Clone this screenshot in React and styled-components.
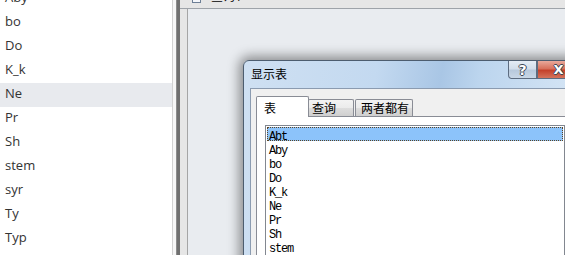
import React from 'react';
import styled, { createGlobalStyle } from 'styled-components';

const GlobalStyle = createGlobalStyle`
	html, body {
		margin: 0;
		padding: 0;
		overflow: hidden;
		background: #fff;
	}
	#root {
		width: 565px;
		height: 255px;
		overflow: hidden;
	}
`;

const Screen = styled.div`
	display: flex;
	width: 565px;
	height: 255px;
	overflow: hidden;
	font-family: 'Open Sans', 'Noto Sans CJK SC', sans-serif;
`;

const NavPane = styled.div`
	width: 172px;
	flex-shrink: 0;
	height: 100%;
	overflow: hidden;
	background: #fff;
	border-right: 1px solid #d2d2d2;
`;

const NavList = styled.ul`
	list-style: none;
	margin: -13px 0 0;
	padding: 0;
`;

const NavItem = styled.li`
	height: 24px;
	line-height: 21px;
	padding-left: 5px;
	font-size: 13px;
	color: #333;
	background: ${props => (props.active ? '#e8eaee' : 'transparent')};
`;

const Splitter = styled.div`
	width: 7px;
	flex-shrink: 0;
	background: linear-gradient(to right, #f6f6f6 0 3px, #8c8c8c 3px 4px, #6f6f6f 4px 7px);
`;

const Main = styled.div`
	flex: 1;
	display: flex;
	flex-direction: column;
	min-width: 0;
`;

const Toolbar = styled.div`
	height: 8px;
	flex-shrink: 0;
	display: flex;
	align-items: flex-end;
	gap: 10px;
	padding-left: 12px;
	overflow: hidden;
	background: #e6e6e6;
	border-bottom: 1px solid #9ea3a9;
`;

const DocIcon = styled.svg`
	flex-shrink: 0;
	margin-bottom: 5px;
`;

const ToolbarLabel = styled.span`
	font-size: 12px;
	line-height: 14px;
	margin-bottom: 4px;
	color: #000;
`;

const Body = styled.div`
	flex: 1;
	display: flex;
	padding-left: 7px;
	background: #e6e6e6;
`;

const Workspace = styled.div`
	flex: 1;
	position: relative;
	background: #e9ecf0;
	border-left: 1px solid #a5a5a5;
`;

const Dialog = styled.div`
	position: absolute;
	left: 55px;
	top: 51px;
	width: 344px;
	height: 240px;
	display: flex;
	flex-direction: column;
	padding: 0 6px;
	box-sizing: border-box;
	border: 1px solid #4d5d6f;
	border-radius: 6px 6px 0 0;
	background: linear-gradient(100deg, #cfe0f2 0%, #c3d9f0 35%, #a9c6e5 52%, #bcd5ee 62%, #d2e3f4 85%, #c9ddf2 100%);
	box-shadow: 0 0 12px 4px rgba(0, 0, 0, 0.4);
`;

const TitleBar = styled.div`
	height: 27px;
	flex-shrink: 0;
	display: flex;
	align-items: flex-start;
`;

const Title = styled.span`
	margin: 6px 0 0 1px;
	font-family: 'Noto Sans CJK SC', sans-serif;
	font-size: 12px;
	line-height: 14px;
	color: #000;
`;

const CaptionButtons = styled.div`
	margin-left: auto;
	display: flex;
`;

const CaptionButton = styled.div`
	width: ${props => (props.close ? 43 : 29)}px;
	height: 18px;
	box-sizing: border-box;
	display: flex;
	align-items: center;
	justify-content: center;
	border: 1px solid #5d6c80;
	border-top: none;
	border-radius: ${props => (props.close ? '0 0 4px 0' : '0 0 0 4px')};
	background: ${props =>
		props.close
			? 'linear-gradient(to bottom, #e9a99b 0%, #d7715c 45%, #c4412b 55%, #d4735c 100%)'
			: 'linear-gradient(to bottom, #e4ecf5 0%, #d2deeb 45%, #b8c9dc 55%, #c9d7e6 100%)'};
	color: #fff;
	font-family: 'DejaVu Sans', sans-serif;
	font-weight: bold;
	font-size: ${props => (props.close ? 13 : 14)}px;
	line-height: 16px;
	text-shadow: 1px 0 0 #3b4654, -1px 0 0 #3b4654, 0 1px 0 #3b4654, 0 -1px 0 #3b4654;
`;

const Content = styled.div`
	flex: 1;
	display: flex;
	flex-direction: column;
	padding: 7px 5px 0;
	background: #f0f0f0;
	border: 1px solid #8b9bb0;
	border-bottom: none;
`;

const TabStrip = styled.div`
	height: 20px;
	display: flex;
	align-items: flex-end;
	flex-shrink: 0;
`;

const Tab = styled.div`
	position: relative;
	z-index: ${props => (props.selected ? 1 : 0)};
	width: ${props => props.width}px;
	height: ${props => (props.selected ? 21 : 17)}px;
	margin-bottom: ${props => (props.selected ? -1 : 0)}px;
	margin-left: ${props => props.offset || 0}px;
	box-sizing: border-box;
	padding: ${props => (props.selected ? 4 : 1)}px 0 0 ${props => props.indent}px;
	border: 1px solid #898c95;
	border-bottom: none;
	border-radius: 2px 2px 0 0;
	background: ${props =>
		props.selected ? '#fff' : 'linear-gradient(to bottom, #f3f3f3 0%, #ebebeb 50%, #dddddd 51%, #cfcfcf 100%)'};
	font-family: 'Noto Sans CJK SC', sans-serif;
	font-size: 12px;
	line-height: 14px;
	color: #000;
	white-space: nowrap;
`;

const TabPanel = styled.div`
	flex: 1;
	padding: 8px 8px 0;
	background: #fff;
	border: 1px solid #898c95;
	border-bottom: none;
`;

const ListBox = styled.ul`
	list-style: none;
	margin: 0;
	padding: 1px;
	height: 200px;
	background: #fff;
	border: 1px solid #828790;
	font-family: 'Liberation Mono', monospace;
	font-size: 12px;
	letter-spacing: -1.2px;
	color: #000;
`;

const ListRow = styled.li`
	height: 14px;
	line-height: 13px;
	box-sizing: border-box;
	padding: 3px 0 0 1px;
	border: 1px dotted ${props => (props.selected ? '#5c4424' : 'transparent')};
	background: ${props => (props.selected ? '#8cc3fa' : 'transparent')};
	white-space: nowrap;
`;

const navItems = ['Aby', 'bo', 'Do', 'K_k', 'Ne', 'Pr', 'Sh', 'stem', 'syr', 'Ty', 'Typ'];
const tableItems = ['Abt', 'Aby', 'bo', 'Do', 'K_k', 'Ne', 'Pr', 'Sh', 'stem', 'syr'];

const tabs = [
	{ label: '表', width: 53, indent: 7, selected: true },
	{ label: '查询', width: 46, indent: 3, offset: -1 },
	{ label: '两者都有', width: 58, indent: 5, offset: 1 },
];

const App = () => (
	<>
		<GlobalStyle />
		<Screen>
			<NavPane>
				<NavList>
					{navItems.map(name => (
						<NavItem key={name} active={name === 'Ne'}>
							{name}
						</NavItem>
					))}
				</NavList>
			</NavPane>
			<Splitter />
			<Main>
				<Toolbar>
					<DocIcon width="9" height="10" viewBox="0 0 9 10">
						<rect x="0.5" y="0.5" width="8" height="9" fill="#f4f6fa" stroke="#6d7f96" />
						<rect x="2" y="6" width="5" height="1" fill="#8aa0bb" />
					</DocIcon>
					<ToolbarLabel>查询1</ToolbarLabel>
				</Toolbar>
				<Body>
					<Workspace>
						<Dialog>
							<TitleBar>
								<Title>显示表</Title>
								<CaptionButtons>
									<CaptionButton>?</CaptionButton>
									<CaptionButton close>X</CaptionButton>
								</CaptionButtons>
							</TitleBar>
							<Content>
								<TabStrip>
									{tabs.map(tab => (
										<Tab
											key={tab.label}
											selected={tab.selected}
											width={tab.width}
											indent={tab.indent}
											offset={tab.offset}
										>
											{tab.label}
										</Tab>
									))}
								</TabStrip>
								<TabPanel>
									<ListBox>
										{tableItems.map((name, i) => (
											<ListRow key={name} selected={i === 0}>
												{name}
											</ListRow>
										))}
									</ListBox>
								</TabPanel>
							</Content>
						</Dialog>
					</Workspace>
				</Body>
			</Main>
		</Screen>
	</>
);

export default App;
